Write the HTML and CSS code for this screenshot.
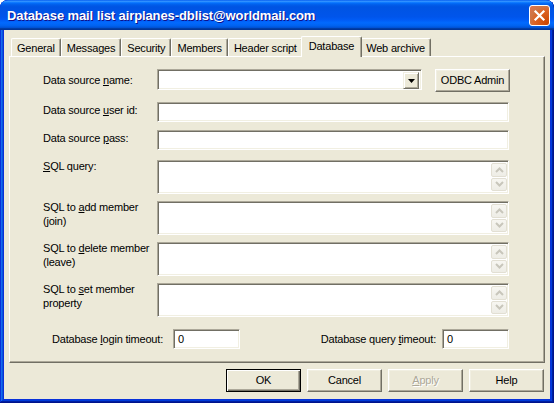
FILE: index.html
```html
<!DOCTYPE html>
<html>
<head>
<meta charset="utf-8">
<title>Database mail list</title>
<link rel="stylesheet" href="styles.css">
</head>
<body>
<div class="window">
  <div class="titlebar">
    <span class="title">Database mail list airplanes-dblist@worldmail.com</span>
    <span class="close"><svg width="21" height="21" viewBox="0 0 21 21"><path d="M6.5 6.5 L14.5 14.5 M14.5 6.5 L6.5 14.5" stroke="#fff" stroke-width="2.2" stroke-linecap="square"/></svg></span>
  </div>
  <div class="client">
    <div class="tabs">
      <span class="tab">General</span>
      <span class="tab">Messages</span>
      <span class="tab">Security</span>
      <span class="tab">Members</span>
      <span class="tab">Header script</span>
      <span class="tab selected">Database</span>
      <span class="tab">Web archive</span>
    </div>
    <div class="panel">
      <div class="row row-name">
        <span class="label label-name">Data source <u>n</u>ame:</span>
        <div class="field combo">
          <span class="combo-btn"><svg width="7" height="4" viewBox="0 0 7 4"><path d="M0 0 H7 L3.5 4 Z" fill="#000"/></svg></span>
        </div>
        <span class="btn btn-odbc">ODBC Admin</span>
      </div>
      <div class="row row-user">
        <span class="label">Data source <u>u</u>ser id:</span>
        <div class="field text"></div>
      </div>
      <div class="row row-pass">
        <span class="label">Data source <u>p</u>ass:</span>
        <div class="field text"></div>
      </div>
      <div class="row row-area row-first">
        <span class="label"><u>S</u>QL query:</span>
        <div class="field area">
          <div class="scrollbar">
            <span class="sbtn"><svg width="9" height="6" viewBox="0 0 9 6"><path d="M1 5 L4.5 1.5 L8 5" fill="none" stroke="#c8c6bb" stroke-width="2"/></svg></span>
            <span class="sbtn"><svg width="9" height="6" viewBox="0 0 9 6"><path d="M1 1 L4.5 4.5 L8 1" fill="none" stroke="#c8c6bb" stroke-width="2"/></svg></span>
          </div>
        </div>
      </div>
      <div class="row row-area">
        <span class="label">SQL to <u>a</u>dd member<br>(join)</span>
        <div class="field area">
          <div class="scrollbar">
            <span class="sbtn"><svg width="9" height="6" viewBox="0 0 9 6"><path d="M1 5 L4.5 1.5 L8 5" fill="none" stroke="#c8c6bb" stroke-width="2"/></svg></span>
            <span class="sbtn"><svg width="9" height="6" viewBox="0 0 9 6"><path d="M1 1 L4.5 4.5 L8 1" fill="none" stroke="#c8c6bb" stroke-width="2"/></svg></span>
          </div>
        </div>
      </div>
      <div class="row row-area">
        <span class="label">SQL to <u>d</u>elete member<br>(leave)</span>
        <div class="field area">
          <div class="scrollbar">
            <span class="sbtn"><svg width="9" height="6" viewBox="0 0 9 6"><path d="M1 5 L4.5 1.5 L8 5" fill="none" stroke="#c8c6bb" stroke-width="2"/></svg></span>
            <span class="sbtn"><svg width="9" height="6" viewBox="0 0 9 6"><path d="M1 1 L4.5 4.5 L8 1" fill="none" stroke="#c8c6bb" stroke-width="2"/></svg></span>
          </div>
        </div>
      </div>
      <div class="row row-area">
        <span class="label">SQL to <u>s</u>et member<br>property</span>
        <div class="field area">
          <div class="scrollbar">
            <span class="sbtn"><svg width="9" height="6" viewBox="0 0 9 6"><path d="M1 5 L4.5 1.5 L8 5" fill="none" stroke="#c8c6bb" stroke-width="2"/></svg></span>
            <span class="sbtn"><svg width="9" height="6" viewBox="0 0 9 6"><path d="M1 1 L4.5 4.5 L8 1" fill="none" stroke="#c8c6bb" stroke-width="2"/></svg></span>
          </div>
        </div>
      </div>
      <div class="row row-timeouts">
        <span class="tlabel">Database <u>l</u>ogin timeout:</span>
        <div class="field small">0</div>
        <span class="spacer"></span>
        <span class="tlabel">Database query <u>t</u>imeout:</span>
        <div class="field small small-right">0</div>
      </div>
    </div>
    <div class="buttons">
      <span class="btn btn-default">OK</span>
      <span class="btn">Cancel</span>
      <span class="btn btn-disabled"><u>A</u>pply</span>
      <span class="btn">Help</span>
    </div>
  </div>
</div>
</body>
</html>
```
FILE: styles.css
```css
html, body {
  margin: 0;
  padding: 0;
  background: #ffffff;
}

body {
  font-family: "Liberation Sans", Arial, sans-serif;
  font-size: 11px;
  letter-spacing: -0.2px;
  color: #000;
}

.window {
  width: 554px;
  height: 403px;
  box-sizing: border-box;
  display: flex;
  flex-direction: column;
  background: #0831d9;
  border-radius: 8px 8px 0 0;
  overflow: hidden;
  box-shadow: inset -1px -1px #00138c, inset 1px 1px #0831d9, inset -2px -2px #001ea0, inset 2px 2px #166aee, inset -3px -3px #003bda, inset 3px 3px #0855dd;
}

.titlebar {
  height: 30px;
  flex: none;
  display: flex;
  align-items: center;
  justify-content: space-between;
  padding: 0 4px 0 7px;
  background: linear-gradient(180deg, #0058ee 0%, #3593ff 4%, #288eff 6%, #127dff 8%, #036ffc 10%, #0262ee 14%, #0057e5 20%, #0054e3 24%, #0055eb 56%, #005bf5 66%, #026afe 76%, #0062ef 86%, #0052d6 92%, #0040ab 94%, #003092 100%);
  border-radius: 8px 8px 0 0;
}

.title {
  color: #fff;
  font-weight: bold;
  font-size: 13px;
  letter-spacing: -0.1px;
  padding-top: 1px;
  text-shadow: 1px 1px #0f1089;
}

.close {
  width: 21px;
  height: 21px;
  box-sizing: border-box;
  border: 1px solid #fff;
  border-radius: 3px;
  background: radial-gradient(circle at 90% 90%, #cc4600 0%, #dc6527 55%, #cd7546 70%, #e3734c 100%);
  display: flex;
  align-items: center;
  justify-content: center;
}

.close svg {
  margin: -1px;
}

.client {
  flex: 1;
  margin: 0 4px 4px 4px;
  background: #ece9d8;
  padding: 6px 5px 0 5px;
  display: flex;
  flex-direction: column;
}

.tabs {
  display: flex;
  align-items: flex-end;
  height: 20px;
  padding-left: 2px;
  position: relative;
  z-index: 1;
}

.tab {
  height: 18px;
  box-sizing: border-box;
  padding: 3px 5px 0 5px;
  background: #ece9d8;
  border-top: 1px solid #fff;
  border-left: 1px solid #fff;
  border-right: 1px solid #716f64;
  box-shadow: inset -1px 0 #aca899;
  border-radius: 2px 2px 0 0;
  line-height: 13px;
  white-space: nowrap;
}

.tab.selected {
  height: 21px;
  margin: 0 -2px -1px -2px;
  padding: 3px 7px 0 7px;
  position: relative;
  z-index: 2;
}

.panel {
  height: 307px;
  box-sizing: border-box;
  border: 1px solid;
  border-color: #fff #716f64 #716f64 #fff;
  box-shadow: inset -1px -1px #aca899;
  padding: 12px 35px 0 33px;
  display: flex;
  flex-direction: column;
}

.row {
  display: flex;
  align-items: flex-start;
}

.label {
  width: 114px;
  flex: none;
  line-height: 14px;
}

.label-name {
  margin-top: 4px;
}

.field {
  box-sizing: border-box;
  background: #fff;
  border: 1px solid;
  border-color: #aca899 #fff #fff #aca899;
  box-shadow: inset 1px 1px #716f64, inset -1px -1px #f1efe2;
}

.row-name .combo {
  flex: 1;
  height: 21px;
  display: flex;
  justify-content: flex-end;
  padding: 2px;
}

.combo-btn {
  width: 16px;
  height: 17px;
  box-sizing: border-box;
  background: #ece9d8;
  border: 1px solid;
  border-color: #f1efe2 #716f64 #716f64 #f1efe2;
  box-shadow: inset 1px 1px #fff, inset -1px -1px #aca899;
  display: flex;
  align-items: center;
  justify-content: center;
}

.btn {
  width: 75px;
  height: 23px;
  box-sizing: border-box;
  flex: none;
  background: #ece9d8;
  border: 1px solid;
  border-color: #fff #716f64 #716f64 #fff;
  box-shadow: inset -1px -1px #aca899, inset 1px 1px #f1efe2;
  display: flex;
  align-items: center;
  justify-content: center;
  padding-bottom: 1px;
}

.btn-odbc {
  margin-left: 13px;
  margin-right: -1px;
}

.row-user {
  margin-top: 10px;
}

.row-pass {
  margin-top: 8px;
}

.row-user .label,
.row-pass .label {
  margin-top: 1px;
}

.text {
  flex: 1;
  height: 20px;
}

.row-area {
  margin-top: 7px;
}

.row-area.row-first {
  margin-top: 10px;
}

.row-area .label {
  margin-top: -1px;
}

.area {
  flex: 1;
  height: 34px;
  display: flex;
  justify-content: flex-end;
  padding: 2px 1px 2px 2px;
}

.scrollbar {
  width: 16px;
  display: flex;
  flex-direction: column;
  gap: 1px;
}

.sbtn {
  flex: 1;
  box-sizing: border-box;
  border: 1px solid #e2dfd3;
  border-radius: 2px;
  background: linear-gradient(180deg, #f7f6f1 0%, #eeede6 100%);
  display: flex;
  align-items: center;
  justify-content: center;
}

.row-timeouts {
  margin-top: 12px;
  align-items: center;
  padding-left: 9px;
}

.tlabel {
  flex: none;
}

.small {
  width: 67px;
  height: 20px;
  margin-left: 10px;
  padding: 3px 0 0 4px;
  line-height: 13px;
}

.small-right {
  margin-left: 6px;
}

.spacer {
  flex: 1;
}

.buttons {
  display: flex;
  justify-content: flex-end;
  gap: 6px;
  margin-top: 6px;
  padding-right: 1px;
}

.btn-default {
  border: 1px solid #000;
  box-shadow: inset 1px 1px #fff, inset -1px -1px #716f64, inset -2px -2px #aca899;
}

.btn-disabled {
  color: #aca899;
  text-shadow: 1px 1px #fff;
}
```
